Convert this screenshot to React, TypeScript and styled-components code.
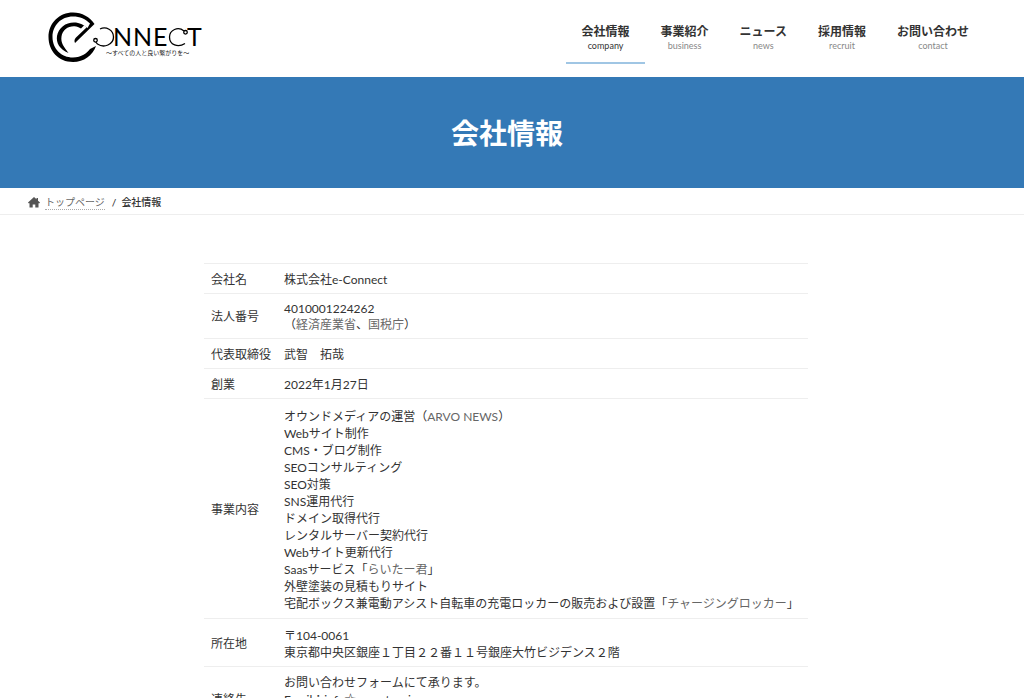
import React from "react";
import styled, { createGlobalStyle } from "styled-components";

const GlobalStyle = createGlobalStyle`
  * { box-sizing: border-box; }
  body {
    margin: 0;
    background: #fff;
    color: #333;
    font-family: Lato, "Noto Sans CJK JP", sans-serif;
    font-size: 12px;
    line-height: 17px;
  }
  a { color: #666; text-decoration: none; }
`;

const Header = styled.header`
  display: flex;
  justify-content: space-between;
  align-items: flex-start;
  height: 77px;
  padding: 12px 40px 0 48px;
`;

const LogoLink = styled.a`
  display: block;
  svg { display: block; }
`;

const NavList = styled.ul`
  display: flex;
  margin: 0;
  padding: 0;
  list-style: none;
`;

const NavLink = styled.a<{ $active?: boolean }>`
  display: flex;
  flex-direction: column;
  align-items: center;
  height: 52px;
  padding: 12px 15px 0 16px;
  border-bottom: 2px solid ${(p) => (p.$active ? "#a0c6e4" : "transparent")};
  color: #333;
  font-weight: 700;
  line-height: 16px;
`;

const NavCaption = styled.span<{ $active?: boolean }>`
  color: ${(p) => (p.$active ? "#333" : "#888")};
  font-size: 9px;
  font-weight: 400;
  line-height: 11px;
`;

const PageHeader = styled.div`
  display: flex;
  justify-content: center;
  align-items: center;
  height: 111px;
  padding-right: 10px;
  background: #3479b6;
`;

const PageTitle = styled.h1`
  margin: 0;
  color: #fff;
  font-size: 28px;
  line-height: 40px;
`;

const Breadcrumb = styled.nav`
  border-bottom: 1px solid #eee;
  padding: 6px 28px 3px;
  font-size: 10px;
  font-weight: 500;
  ol {
    display: flex;
    align-items: center;
    margin: 0;
    padding: 0;
    list-style: none;
  }
  li { display: flex; align-items: center; }
  li + li::before { content: "/"; margin: 0 5px 0 7px; }
  svg { margin-right: 5px; }
`;

const CrumbLink = styled.a`
  border-bottom: 1px dotted #aaa;
  font-weight: 400;
  line-height: 13px;
`;

const Main = styled.main`
  padding: 48px 12px 48px 0;
`;

const CompanyTable = styled.table`
  width: 604px;
  max-width: 100%;
  margin: 0 auto;
  border-collapse: collapse;
  border-top: 1px solid #eee;
  th, td {
    border-bottom: 1px solid #eee;
    padding: 7px 7px 5px;
    font-weight: 400;
    text-align: left;
    vertical-align: middle;
  }
  th { width: 73px; padding-right: 0; white-space: nowrap; }
`;

const Row = styled.tr<{ $height?: number; $tight?: boolean; $top?: boolean }>`
  height: ${(p) => (p.$height ? `${p.$height}px` : "auto")};
  line-height: ${(p) => (p.$tight ? "16px" : "17px")};
  && td { vertical-align: ${(p) => (p.$top ? "top" : "middle")}; }
`;

const Line = styled.div``;

const navItems = [
  { label: "会社情報", caption: "company", active: true },
  { label: "事業紹介", caption: "business" },
  { label: "ニュース", caption: "news" },
  { label: "採用情報", caption: "recruit" },
  { label: "お問い合わせ", caption: "contact" },
];

type CompanyRow = {
  head: string;
  lines: React.ReactNode[];
  height?: number;
  tight?: boolean;
  top?: boolean;
};

const rows: CompanyRow[] = [
  { head: "会社名", lines: ["株式会社e-Connect"] },
  {
    head: "法人番号",
    tight: true,
    lines: [
      "4010001224262",
      <>（<a href="#meti">経済産業省</a>、<a href="#nta">国税庁</a>）</>,
    ],
  },
  { head: "代表取締役", lines: ["武智　拓哉"] },
  { head: "創業", lines: ["2022年1月27日"] },
  {
    head: "事業内容",
    height: 220,
    lines: [
      <>オウンドメディアの運営（<a href="#arvo">ARVO NEWS</a>）</>,
      "Webサイト制作",
      "CMS・ブログ制作",
      "SEOコンサルティング",
      "SEO対策",
      "SNS運用代行",
      "ドメイン取得代行",
      "レンタルサーバー契約代行",
      "Webサイト更新代行",
      <>Saasサービス「<a href="#writer">らいたー君</a>」</>,
      "外壁塗装の見積もりサイト",
      <>宅配ボックス兼電動アシスト自転車の充電ロッカーの販売および設置「<a href="#locker">チャージングロッカー</a>」</>,
    ],
  },
  {
    head: "所在地",
    height: 48,
    lines: ["〒104-0061", "東京都中央区銀座１丁目２２番１１号銀座大竹ビジデンス２階"],
  },
  {
    head: "連絡先",
    height: 64,
    top: true,
    lines: ["お問い合わせフォームにて承ります。", "Email：info☆e-cnct.co.jp"],
  },
];

const Logo = () => (
  <svg width="156" height="51" viewBox="48 12 156 51" role="img" aria-label="e-Connect">
    <path
      fill="#000"
      d="M94.500 24 L75 43 C74 41 74.500 39 76 37.500 L86.500 27.500
         C84 25 80 23 76 22.500 C67 21.500 58.500 27 57 36 C56 43 59.500 49 68.500 53
         C64 47 60.500 43 61.500 36.500 C62.500 30 68 26 74.500 26.300 C77 26.500 79 27.300 81 28.500 L84 25.500 L87.500 28
         L90 23.500 C85.500 19 80 16.500 73 16.500 C61 16.500 52.500 25.500 52.500 37 C52.500 49 61.500 57.500 73 57.500
         C81.500 57.500 87 53 90 49 L96 46 C92.500 55.500 84 62 73 62 C58.500 62 48.500 51 48.500 37
         C48.500 23 59.500 12.500 73 12.500 C82 12.500 90 17 94.500 24 Z"
    />
    <g fill="none" stroke="#000" strokeWidth="1.300">
      <path d="M100 29 C106 26 113.500 30 113.500 37 C113.500 44.500 104 48.500 97.500 44 C96.500 43 96 42.500 96 42" />
      <circle cx="95.500" cy="40.300" r="1.800" />
      <path d="M184 31 C178 26 169.500 30 169.500 37 C169.500 45 178 48 185 43.500" />
      <circle cx="185.500" cy="32.300" r="1.800" />
    </g>
    <g fontFamily="Lato, sans-serif" fontSize="25" fill="#000">
      <text x="113" y="46">N</text>
      <text x="133" y="46">N</text>
      <text x="153" y="46">E</text>
      <text x="187" y="46">T</text>
    </g>
    <text x="106" y="55" fontFamily="Noto Sans CJK JP, sans-serif" fontSize="6" fill="#222">
      〜すべての人と良い繋がりを〜
    </text>
  </svg>
);

const HomeIcon = () => (
  <svg width="12" height="11" viewBox="0 0 12 11" aria-hidden="true">
    <path fill="#555" d="M6 0 L8.500 2.300 V1 H10 V3.700 L12 5.500 L11.500 6.200 H10.500 V10.500 H7.300 V7.500 H4.700 V10.500 H1.500 V6.200 H0.500 L0 5.500 Z" />
  </svg>
);

export default function App() {
  return (
    <>
      <GlobalStyle />
      <Header>
        <LogoLink href="#top"><Logo /></LogoLink>
        <nav aria-label="メイン">
          <NavList>
            {navItems.map((n) => (
              <li key={n.caption}>
                <NavLink href={`#${n.caption}`} $active={n.active}>
                  {n.label}
                  <NavCaption $active={n.active}>{n.caption}</NavCaption>
                </NavLink>
              </li>
            ))}
          </NavList>
        </nav>
      </Header>
      <PageHeader><PageTitle>会社情報</PageTitle></PageHeader>
      <Breadcrumb aria-label="パンくず">
        <ol>
          <li><HomeIcon /><CrumbLink href="#top">トップページ</CrumbLink></li>
          <li>会社情報</li>
        </ol>
      </Breadcrumb>
      <Main>
        <CompanyTable>
          <tbody>
            {rows.map((r) => (
              <Row key={r.head} $height={r.height} $tight={r.tight} $top={r.top}>
                <th scope="row">{r.head}</th>
                <td>{r.lines.map((l, i) => <Line key={i}>{l}</Line>)}</td>
              </Row>
            ))}
          </tbody>
        </CompanyTable>
      </Main>
    </>
  );
}
